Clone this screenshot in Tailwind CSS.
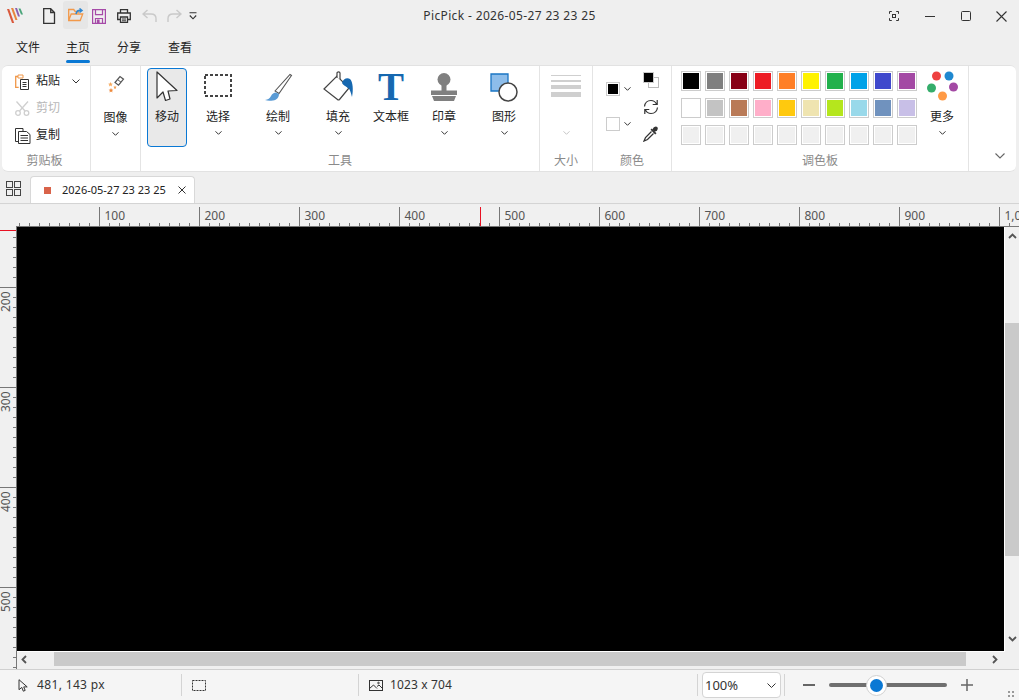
<!DOCTYPE html>
<html lang="zh">
<head>
  <meta charset="UTF-8" />
  <title>PicPick</title>
  <script src="https://cdn.jsdelivr.net/npm/@tailwindcss/browser@4"></script>
</head>
<body class="bg-[#efefef] font-['Noto_Sans','Noto_Sans_CJK_SC',sans-serif] text-[12px] leading-[18px] text-[#222] overflow-hidden">
<div class="w-[1019px] h-[700px] flex flex-col overflow-hidden">

  <!-- title bar -->
  <div class="h-[32px] grid grid-cols-[1fr_auto_1fr] items-center">
    <div class="flex items-center h-[32px]">
      <svg class="ml-[7px] mb-[1px]" width="18" height="17" viewBox="0 0 18 17">
        <path d="M0 2h2.200l5 14H5z" fill="#d9593d"/><path d="M4 1h2.200l4.300 12H8.400z" fill="#e8863f"/>
        <path d="M8 1h2l3 8.500h-2z" fill="#8d5fb0"/><path d="M11.500 1.500h2l2.500 6h-2z" fill="#4aa57a"/>
      </svg>
      <svg class="ml-[17px]" width="14" height="16" viewBox="0 0 14 16" fill="none" stroke="#333" stroke-width="1.300">
        <path d="M1.700.700h7l3.800 3.800v10.800H1.700zM8.700.700v3.800h3.800"/>
      </svg>
      <div class="ml-[7px] w-[25px] h-[28px] mt-[-2px] bg-[#e6e6e6] rounded-[3px] flex items-center justify-center">
        <svg width="16" height="14" viewBox="0 0 16 14" fill="none">
          <path d="M.7 12.500V1.500h5l1.500 2h3v1.500M.7 12.500l2.500-6.500h11.500l-2.500 6.500z" stroke="#f2994a" stroke-width="1.300"/>
          <path d="M8 6c.5-2.500 2.500-4 5-3.500M11.500.500l2.500 2-2.500 2" stroke="#2f87d0" stroke-width="1.500"/>
        </svg>
      </div>
      <svg class="ml-[4px]" width="14" height="15" viewBox="0 0 14 15" fill="none" stroke="#a64aa8" stroke-width="1.200">
        <path d="M.6.600h12.800v13.800H.6zM3.500.600v5h7v-5M3.500 14.400V9.500h7v4.900"/>
        <path d="M5.500 11h1.500v3h-1.500z" fill="#a64aa8"/>
      </svg>
      <svg class="ml-[11px]" width="14" height="14" viewBox="0 0 14 14" fill="none" stroke="#333" stroke-width="1.300">
        <path d="M3.500 4V.7h7V4M3.500 10.500H.7V4h12.600v6.500h-2.800M3.500 8h7v5.300h-7z"/>
        <path d="M5 10h4M5 11.800h4" stroke-width="1"/>
      </svg>
      <svg class="ml-[11px]" width="15" height="14" viewBox="0 0 15 14" fill="none" stroke="#c9c9c9" stroke-width="1.400">
        <path d="M5.500 1 1 5l4.500 4M1 5h8c3 0 5 1.700 5 4.500v3.500"/>
      </svg>
      <svg class="ml-[10px]" width="15" height="14" viewBox="0 0 15 14" fill="none" stroke="#c9c9c9" stroke-width="1.400">
        <path d="M9.500 1 14 5 9.500 9M14 5H6C3 5 1 6.700 1 9.500V13"/>
      </svg>
      <svg class="ml-[7px]" width="8" height="8" viewBox="0 0 8 8" fill="none" stroke="#333" stroke-width="1.100">
        <path d="M.5.700h7M.8 3.500 4 6.800l3.200-3.300"/>
      </svg>
    </div>
    <div class="text-[12px] tracking-[0.36px] text-[#333]">PicPick - 2026-05-27 23 23 25</div>
    <div class="flex items-center justify-end h-[32px]">
      <svg width="10" height="10" viewBox="0 0 10 10" fill="none" stroke="#333" stroke-width="1">
        <path d="M.5 2.800V.5h2.300M7.200.5h2.300v2.300M9.500 7.200v2.300H7.200M2.800 9.500H.5V7.200"/><rect x="3.500" y="3.500" width="3" height="3"/>
      </svg>
      <svg class="ml-[26px]" width="10" height="10" viewBox="0 0 10 10" stroke="#333"><path d="M0 5.500h10"/></svg>
      <svg class="ml-[26px]" width="10" height="10" viewBox="0 0 10 10" fill="none" stroke="#333"><rect x=".5" y=".5" width="9" height="9" rx="1"/></svg>
      <svg class="ml-[25px] mr-[12px]" width="11" height="11" viewBox="0 0 11 11" stroke="#333" stroke-width="1.100"><path d="M.5.500l10 10M10.500.500l-10 10"/></svg>
    </div>
  </div>

  <!-- menu tabs -->
  <div class="h-[33px] flex pl-[16px] gap-[27px] text-[12px] text-[#222]">
    <div class="pt-[7px]">文件</div>
    <div class="pt-[7px] -ml-[1px] relative">主页<div class="absolute left-0 right-0 top-[28px] h-[3px] rounded-[2px] bg-[#0a78d4]"></div></div>
    <div class="pt-[7px]">分享</div>
    <div class="pt-[7px]">查看</div>
  </div>

  <!-- ribbon -->
  <div class="h-[107px] ml-[2px] w-[1014px] bg-white rounded-[6px] border-y border-[#e2e2e2] flex">

    <!-- clipboard -->
    <div class="w-[89px] border-r border-[#e4e4e4] flex flex-col">
      <div class="h-[86px] pl-[13px] pt-[2px]">
        <div class="flex items-center h-[27px]">
          <svg width="14" height="16" viewBox="0 0 14 16" fill="none">
            <path d="M4 2.500H.7v10.800h3" stroke="#f0984a" stroke-width="1.300"/><path d="M3 1h5v3H3z" fill="#fff" stroke="#f0984a"/>
            <path d="M5.500 5.500h8v10h-8zM7.500 8.500h4M7.500 10.500h4M7.500 12.500h4" stroke="#333"/>
          </svg>
          <span class="ml-[7px] mb-[1px]">粘贴</span>
          <svg class="ml-[12px]" width="8" height="5" viewBox="0 0 8 5" fill="none" stroke="#333"><path d="M.5.500 4 4l3.500-3.500"/></svg>
        </div>
        <div class="flex items-center h-[27px] text-[#b8b8b8]">
          <svg width="15" height="15" viewBox="0 0 15 15" fill="none" stroke="#cfcfcf" stroke-width="1.300">
            <circle cx="3" cy="12" r="2.300"/><circle cx="11.500" cy="12" r="2.300"/><path d="M1.500.5 10 10M13 .5 4.500 10"/>
          </svg>
          <span class="ml-[6px] mb-[1px]">剪切</span>
        </div>
        <div class="flex items-center h-[27px]">
          <svg width="16" height="16" viewBox="0 0 16 16" fill="none" stroke="#333">
            <path d="M3.500 13.500H.5V.5H8V3"/><path d="M3.500 3.500h8l3.500 3v9H3.500zM5.500 7.500h7.500M5.500 10h7.500M5.500 12.500h7.500"/>
          </svg>
          <span class="ml-[5px] mb-[1px]">复制</span>
        </div>
      </div>
      <div class="h-[19px] text-center text-[#8a8a8a] pr-[3px]">剪贴板</div>
    </div>

    <!-- image -->
    <div class="w-[50px] border-r border-[#e4e4e4] flex flex-col items-center">
      <svg class="mt-[9px]" width="18" height="19" viewBox="0 0 18 19">
        <path d="M8 7.500 13 1.500l3.500 2.700-5 6z" fill="#fff" stroke="#555" stroke-width="1.200"/>
        <path d="M10.500 4.500l3.500 2.700" stroke="#555"/>
        <path d="M3.500 7l.7 1.600 1.700.2-1.300 1 .4 1.700-1.500-.9-1.500.9.400-1.700-1.300-1 1.700-.2z" fill="#f7a95c"/>
        <path d="M8 10.500l.5 1.200 1.300.1-1 .8.300 1.300L8 13.200l-1.100.7.300-1.300-1-.8 1.300-.1z" fill="#f2994a"/>
        <path d="M4 13l.7 1.600 1.700.2-1.300 1 .4 1.700-1.500-.9-1.500.9.400-1.700-1.300-1 1.700-.2z" fill="#ee8a3c"/>
      </svg>
      <div class="mt-[15px]">图像</div>
      <svg class="mt-[5px]" width="7" height="4" viewBox="0 0 7 4" fill="none" stroke="#333"><path d="M.5.300 3.500 3.300l3-3"/></svg>
    </div>

    <!-- tools -->
    <div class="w-[399px] border-r border-[#e4e4e4] flex flex-col">
      <div class="h-[86px] flex pl-[6px] pt-[2px]">
        <div class="w-[40px] h-[79px] rounded-[4px] border border-[#0a78d4] bg-[#e9e9e9] flex flex-col items-center">
          <svg class="mt-[2px] ml-[1px]" width="24" height="31" viewBox="0 0 24 31" fill="none" stroke="#333" stroke-width="1.200" stroke-linejoin="round">
            <path d="M1 1v26l6-6 2.500 8.500 4.500-1.500-2-8 9-.500z" fill="#fff"/>
          </svg>
          <div class="mt-[6px]">移动</div>
        </div>
        <div class="w-[62px] flex flex-col items-center">
          <div class="h-[40px] pt-[6px]">
            <svg class="block" width="28" height="23" viewBox="0 0 28 23" fill="none" stroke="#444" stroke-width="2" stroke-dasharray="3 2"><rect x="1" y="1" width="26" height="21"/></svg>
          </div>
          <div>选择</div>
          <svg class="mt-[5px]" width="7" height="4" viewBox="0 0 7 4" fill="none" stroke="#333"><path d="M.5.300 3.500 3.300l3-3"/></svg>
        </div>
        <div class="w-[58px] flex flex-col items-center">
          <div class="h-[40px] pt-[5px]">
            <svg class="block" width="29" height="29" viewBox="0 0 29 29" fill="none">
              <path d="M11 18 26 1.500l1.500 1L15 20.500z" fill="#fff" stroke="#555" stroke-width="1.100"/>
              <path d="M1 27c3-.3 5-1.800 6-4 1-2 3-3.500 5-3.500l3 1.500c0 3-2 6-6 6.500-3 .3-6 .3-8-.5z" fill="#5a9bd5"/>
            </svg>
          </div>
          <div>绘制</div>
          <svg class="mt-[5px]" width="7" height="4" viewBox="0 0 7 4" fill="none" stroke="#333"><path d="M.5.300 3.500 3.300l3-3"/></svg>
        </div>
        <div class="w-[62px] flex flex-col items-center">
          <div class="h-[40px] pt-[3px]">
            <svg class="block" width="31" height="31" viewBox="0 0 31 31" fill="none">
              <path d="M1 18 14 5l12 12-9.500 11.500c-.5.500-1.500.500-2 0z" fill="#fff" stroke="#444" stroke-width="1.200"/>
              <path d="M14 7V2c0-1.500 3-1.500 3 0v6" fill="#fff" stroke="#444" stroke-width="1.200"/>
              <path d="M19 12c1-4 5-6 8-4 3 3 3.500 11 2 18-1-4-2-8-4-9-2-1.500-5-3-6-5z" fill="#1668b0"/>
            </svg>
          </div>
          <div>填充</div>
          <svg class="mt-[5px]" width="7" height="4" viewBox="0 0 7 4" fill="none" stroke="#333"><path d="M.5.300 3.500 3.300l3-3"/></svg>
        </div>
        <div class="w-[44px] flex flex-col items-center">
          <div class="h-[40px] font-['Liberation_Serif',serif] font-bold text-[39px] leading-[37px] text-[#1668b0]">T</div>
          <div class="whitespace-nowrap">文本框</div>
        </div>
        <div class="w-[62px] flex flex-col items-center">
          <div class="h-[40px] pt-[4px]">
            <svg class="block" width="28" height="29" viewBox="0 0 28 29" fill="#808080">
              <circle cx="14" cy="7.500" r="6.500"/><path d="M11.500 12h5v7h-5zM1 18.500h26V23H1zM2 24h24l-2 5H4z"/>
            </svg>
          </div>
          <div>印章</div>
          <svg class="mt-[5px]" width="7" height="4" viewBox="0 0 7 4" fill="none" stroke="#333"><path d="M.5.300 3.500 3.300l3-3"/></svg>
        </div>
        <div class="w-[58px] flex flex-col items-center">
          <div class="h-[40px] pt-[5px]">
            <svg class="block" width="28" height="29" viewBox="0 0 28 29" fill="none">
              <path d="M1 1h17v17H1z" fill="#8dbdea" stroke="#1a75c4" stroke-width="1.300"/>
              <circle cx="18" cy="19" r="9" fill="#fff" stroke="#444" stroke-width="1.500"/>
            </svg>
          </div>
          <div>图形</div>
          <svg class="mt-[5px]" width="7" height="4" viewBox="0 0 7 4" fill="none" stroke="#333"><path d="M.5.300 3.500 3.300l3-3"/></svg>
        </div>
      </div>
      <div class="h-[19px] text-center text-[#8a8a8a]">工具</div>
    </div>

    <!-- size -->
    <div class="w-[53px] border-r border-[#e4e4e4] flex flex-col items-center">
      <div class="h-[86px] flex flex-col items-center">
        <div class="mt-[9px] w-[30px] flex flex-col gap-[3px]">
          <div class="h-[1px] bg-[#cfcfcf]"></div><div class="h-[2px] mt-[1px] bg-[#cfcfcf]"></div><div class="h-[4px] bg-[#cfcfcf]"></div><div class="h-[5px] bg-[#cfcfcf]"></div>
        </div>
        <svg class="mt-[34px]" width="7" height="4" viewBox="0 0 7 4" fill="none" stroke="#c5c5c5"><path d="M.5.300 3.500 3.300l3-3"/></svg>
      </div>
      <div class="h-[19px] text-[#8a8a8a]">大小</div>
    </div>

    <!-- colours -->
    <div class="w-[79px] border-r border-[#e4e4e4] flex flex-col">
      <div class="h-[86px] flex">
        <div class="pl-[13px] pt-[16px] w-[50px]">
          <div class="flex items-center gap-[4px]">
            <div class="w-[14px] h-[14px] border border-[#ccc] bg-black bg-clip-content p-[1px]"></div>
            <svg width="7" height="4" viewBox="0 0 7 4" fill="none" stroke="#333"><path d="M.5.300 3.500 3.300l3-3"/></svg>
          </div>
          <div class="flex items-center gap-[4px] mt-[21px]">
            <div class="w-[14px] h-[14px] border border-[#ccc] bg-white"></div>
            <svg width="7" height="4" viewBox="0 0 7 4" fill="none" stroke="#333"><path d="M.5.300 3.500 3.300l3-3"/></svg>
          </div>
        </div>
        <div class="flex flex-col pt-[6px]">
          <svg width="16" height="16" viewBox="0 0 16 16"><rect x="5.500" y="5.500" width="10" height="10" fill="#fff" stroke="#bbb"/><rect x=".5" y=".5" width="10" height="10" fill="#000" stroke="#ccc"/></svg>
          <svg class="mt-[11px]" width="16" height="16" viewBox="0 0 16 16" fill="none" stroke="#333" stroke-width="1.200">
            <path d="M1.500 7.500C2 3.500 4.800 1.500 8 1.500c2.500 0 4.500 1.500 5.500 3.500M14.200 1v4.500H9.700M14.500 8.500c-.5 4-3.300 6-6.500 6-2.500 0-4.500-1.500-5.500-3.500M1.800 15v-4.500h4.500"/>
          </svg>
          <svg class="mt-[11px]" width="16" height="16" viewBox="0 0 16 16" fill="none">
            <path d="M10 2.500c1.200-1.800 3-2.500 4.200-1.400s.6 3-1.200 4.200l-1.500.5-2-2z" fill="#333"/>
            <path d="M7.500 3.800 8.800 2.500l4.700 4.700-1.300 1.300z" fill="#333"/>
            <path d="M8.500 5.500 2.500 11.500l-1.500 3.500 3.500-1.500 6-6" fill="#fff" stroke="#333" stroke-width="1.300"/>
          </svg>
        </div>
      </div>
      <div class="h-[19px] text-center text-[#8a8a8a]">颜色</div>
    </div>

    <!-- palette -->
    <div class="w-[297px] border-r border-[#e4e4e4] flex flex-col">
      <div class="h-[86px] flex pl-[9px] pt-[5px]">
        <div class="grid grid-cols-10 gap-x-[4px] gap-y-[7px] h-[74px] content-start">
          <div class="w-[20px] h-[20px] border border-[#ccc] p-[1px]"><div class="w-full h-full bg-[#000000]"></div></div>
          <div class="w-[20px] h-[20px] border border-[#ccc] p-[1px]"><div class="w-full h-full bg-[#7f7f7f]"></div></div>
          <div class="w-[20px] h-[20px] border border-[#ccc] p-[1px]"><div class="w-full h-full bg-[#880015]"></div></div>
          <div class="w-[20px] h-[20px] border border-[#ccc] p-[1px]"><div class="w-full h-full bg-[#ed1c24]"></div></div>
          <div class="w-[20px] h-[20px] border border-[#ccc] p-[1px]"><div class="w-full h-full bg-[#ff7f27]"></div></div>
          <div class="w-[20px] h-[20px] border border-[#ccc] p-[1px]"><div class="w-full h-full bg-[#fff200]"></div></div>
          <div class="w-[20px] h-[20px] border border-[#ccc] p-[1px]"><div class="w-full h-full bg-[#22b14c]"></div></div>
          <div class="w-[20px] h-[20px] border border-[#ccc] p-[1px]"><div class="w-full h-full bg-[#00a2e8]"></div></div>
          <div class="w-[20px] h-[20px] border border-[#ccc] p-[1px]"><div class="w-full h-full bg-[#3f48cc]"></div></div>
          <div class="w-[20px] h-[20px] border border-[#ccc] p-[1px]"><div class="w-full h-full bg-[#a349a4]"></div></div>

          <div class="w-[20px] h-[20px] border border-[#ccc] p-[1px]"><div class="w-full h-full bg-[#ffffff]"></div></div>
          <div class="w-[20px] h-[20px] border border-[#ccc] p-[1px]"><div class="w-full h-full bg-[#c3c3c3]"></div></div>
          <div class="w-[20px] h-[20px] border border-[#ccc] p-[1px]"><div class="w-full h-full bg-[#b97a57]"></div></div>
          <div class="w-[20px] h-[20px] border border-[#ccc] p-[1px]"><div class="w-full h-full bg-[#ffaec9]"></div></div>
          <div class="w-[20px] h-[20px] border border-[#ccc] p-[1px]"><div class="w-full h-full bg-[#ffc90e]"></div></div>
          <div class="w-[20px] h-[20px] border border-[#ccc] p-[1px]"><div class="w-full h-full bg-[#efe4b0]"></div></div>
          <div class="w-[20px] h-[20px] border border-[#ccc] p-[1px]"><div class="w-full h-full bg-[#b5e61d]"></div></div>
          <div class="w-[20px] h-[20px] border border-[#ccc] p-[1px]"><div class="w-full h-full bg-[#99d9ea]"></div></div>
          <div class="w-[20px] h-[20px] border border-[#ccc] p-[1px]"><div class="w-full h-full bg-[#7092be]"></div></div>
          <div class="w-[20px] h-[20px] border border-[#ccc] p-[1px]"><div class="w-full h-full bg-[#c8bfe7]"></div></div>

          <div class="w-[20px] h-[20px] border border-[#ccc] p-[1px]"><div class="w-full h-full bg-[#f0f0f0]"></div></div>
          <div class="w-[20px] h-[20px] border border-[#ccc] p-[1px]"><div class="w-full h-full bg-[#f0f0f0]"></div></div>
          <div class="w-[20px] h-[20px] border border-[#ccc] p-[1px]"><div class="w-full h-full bg-[#f0f0f0]"></div></div>
          <div class="w-[20px] h-[20px] border border-[#ccc] p-[1px]"><div class="w-full h-full bg-[#f0f0f0]"></div></div>
          <div class="w-[20px] h-[20px] border border-[#ccc] p-[1px]"><div class="w-full h-full bg-[#f0f0f0]"></div></div>
          <div class="w-[20px] h-[20px] border border-[#ccc] p-[1px]"><div class="w-full h-full bg-[#f0f0f0]"></div></div>
          <div class="w-[20px] h-[20px] border border-[#ccc] p-[1px]"><div class="w-full h-full bg-[#f0f0f0]"></div></div>
          <div class="w-[20px] h-[20px] border border-[#ccc] p-[1px]"><div class="w-full h-full bg-[#f0f0f0]"></div></div>
          <div class="w-[20px] h-[20px] border border-[#ccc] p-[1px]"><div class="w-full h-full bg-[#f0f0f0]"></div></div>
          <div class="w-[20px] h-[20px] border border-[#ccc] p-[1px]"><div class="w-full h-full bg-[#f0f0f0]"></div></div>
        </div>
        <div class="ml-[9px] flex flex-col items-center w-[32px]">
          <svg width="31" height="30" viewBox="0 0 31 30">
            <circle cx="9.500" cy="5" r="4.500" fill="#ee4040"/><circle cx="22" cy="5" r="4.500" fill="#1f88d0"/>
            <circle cx="4.500" cy="17" r="4.500" fill="#35ad6b"/><circle cx="26.500" cy="16" r="4.500" fill="#a349a4"/>
            <circle cx="15.500" cy="25" r="4.500" fill="#ff9a45"/>
          </svg>
          <div class="mt-[7px]">更多</div>
          <svg class="mt-[5px]" width="7" height="4" viewBox="0 0 7 4" fill="none" stroke="#333"><path d="M.5.300 3.500 3.300l3-3"/></svg>
        </div>
      </div>
      <div class="h-[19px] text-center text-[#8a8a8a]">调色板</div>
    </div>

    <div class="flex-1 flex items-end justify-end pb-[12px] pr-[11px]">
      <svg width="10" height="6" viewBox="0 0 10 6" fill="none" stroke="#666" stroke-width="1.100"><path d="M.5.500 5 5 9.500.500"/></svg>
    </div>
  </div>

  <!-- document tabs -->
  <div class="h-[32px] flex items-end border-b border-[#d4d4d4]">
    <svg class="ml-[6px] mb-[7px]" width="15" height="15" viewBox="0 0 15 15" fill="none" stroke="#444">
      <rect x=".5" y=".5" width="6" height="6"/><rect x="8.500" y=".5" width="6" height="6"/><rect x=".5" y="8.500" width="6" height="6"/><rect x="8.500" y="8.500" width="6" height="6"/>
    </svg>
    <div class="ml-[9px] w-[165px] h-[27px] bg-white border border-b-0 border-[#d8d8d8] rounded-t-[4px] flex items-center">
      <div class="ml-[13px] w-[7px] h-[7px] bg-[#d9634a]"></div>
      <span class="ml-[11px] text-[11px] text-[#222]">2026-05-27 23 23 25</span>
      <svg class="ml-[12px]" width="8" height="8" viewBox="0 0 8 8" stroke="#333"><path d="M.5.500l7 7M7.500.500l-7 7"/></svg>
    </div>
  </div>

  <!-- rulers + canvas -->
  <div class="h-[464px] grid grid-cols-[17px_1fr] grid-rows-[22px_1fr] mt-[1px]">
    <svg id="ruler-top" class="col-span-2 bg-[#f0f0f0]" width="1019" height="22" viewBox="0 205 1019 22"></svg>
    <svg id="ruler-left" class="bg-[#f0f0f0]" width="17" height="442" viewBox="0 227 17 442"></svg>
    <div class="grid grid-cols-[987px_1px_1fr] grid-rows-[424px_1px_1fr] bg-[#f0f0f0]">
      <div class="bg-black"></div>
      <div class="bg-white"></div>
      <div class="row-span-3 flex flex-col items-center">
        <svg class="mt-[6px]" width="9" height="6" viewBox="0 0 9 6" fill="none" stroke="#555" stroke-width="1.800"><path d="M1 5l3.500-3.500L8 5"/></svg>
        <div class="mt-[84px] w-full h-[233px] bg-[#cacaca]"></div>
        <svg class="mt-[80px]" width="9" height="6" viewBox="0 0 9 6" fill="none" stroke="#555" stroke-width="1.800"><path d="M1 1l3.500 3.500L8 1"/></svg>
      </div>
      <div class="col-span-2 bg-white"></div>
      <div class="col-span-1 flex items-start">
        <svg class="ml-[4px] mt-[3px]" width="6" height="9" viewBox="0 0 6 9" fill="none" stroke="#555" stroke-width="1.800"><path d="M5 1 1.500 4.500 5 8"/></svg>
        <div class="ml-[27px] w-[912px] h-[14px] bg-[#cacaca]"></div>
        <svg class="ml-[26px] mt-[3px]" width="6" height="9" viewBox="0 0 6 9" fill="none" stroke="#555" stroke-width="1.800"><path d="M1 1l3.500 3.500L1 8"/></svg>
      </div>
    </div>
  </div>

  <!-- status bar -->
  <div class="flex-1 bg-[#f5f5f5] border-t border-[#d0d0d0] flex items-center text-[12px] text-[#333] relative">
    <div class="w-[181px] flex items-center pl-[18px]">
      <svg width="10" height="13" viewBox="0 0 10 13" fill="none" stroke="#333"><path d="M1 .7v10l2.800-2.300 1.500 3.800 1.900-.8-1.500-3.500h3.500z"/></svg>
      <span class="ml-[9px] tracking-[0.35px]">481, 143 px</span>
    </div>
    <div class="w-[1px] h-[22px] bg-[#d4d4d4]"></div>
    <div class="w-[176px] pl-[10px]">
      <svg class="block" width="14" height="11" viewBox="0 0 14 11" fill="none" stroke="#333" stroke-dasharray="2 1"><rect x=".5" y=".5" width="13" height="10"/></svg>
    </div>
    <div class="w-[1px] h-[22px] bg-[#d4d4d4]"></div>
    <div class="w-[338px] flex items-center pl-[10px]">
      <svg width="14" height="11" viewBox="0 0 14 11" fill="none" stroke="#333"><rect x=".5" y=".5" width="13" height="10"/><path d="M.5 8.500 4.500 5l3.500 3.500M8 6.500l2-1.500 3.500 3.500"/><circle cx="9.500" cy="3" r=".8"/></svg>
      <span class="ml-[7px] tracking-[0.15px]">1023 x 704</span>
    </div>
    <div class="w-[1px] h-[22px] bg-[#d4d4d4]"></div>
    <div class="ml-[4px] w-[79px] h-[26px] bg-white border border-[#d4d4d4] rounded-[4px] flex items-center justify-between px-[2px]">
      <span class="text-[13px]">100%</span>
      <svg class="mr-[2px]" width="9" height="5" viewBox="0 0 9 5" fill="none" stroke="#333"><path d="M.5.500 4.500 4.500l4-4"/></svg>
    </div>
    <div class="ml-[3px] w-[1px] h-[22px] bg-[#d4d4d4]"></div>
    <div class="ml-[18px] w-[12px] h-[2px] bg-[#666]"></div>
    <div class="ml-[14px] w-[118px] h-[4px] rounded-full bg-[#6f6f6f] relative">
      <div class="absolute left-[37px] top-[-8.500px] w-[21px] h-[21px] rounded-full bg-white border border-[#d0d0d0] flex items-center justify-center">
        <div class="w-[13px] h-[13px] rounded-full bg-[#0a78d4]"></div>
      </div>
    </div>
    <svg class="ml-[14px]" width="12" height="12" viewBox="0 0 12 12" stroke="#666" stroke-width="1.500"><path d="M0 6h12M6 0v12"/></svg>
    <svg class="absolute left-[1008px] top-[21px]" width="6" height="7" viewBox="0 0 6 7" fill="#999"><rect x="0" y="0" width="2" height="2"/><rect x="4" y="0" width="2" height="2"/><rect x="0" y="4" width="2" height="2"/><rect x="4" y="4" width="2" height="2"/></svg>
  </div>
</div>

<script>
  // rulers: ticks every 10px, a long tick and a label every 100
  const NS = "http://www.w3.org/2000/svg";
  function add(svg, tag, attrs, txt) {
    const el = document.createElementNS(NS, tag);
    for (const k in attrs) el.setAttribute(k, attrs[k]);
    if (txt) el.textContent = txt;
    svg.appendChild(el);
  }
  const top_ = document.getElementById("ruler-top");
  const left_ = document.getElementById("ruler-left");

  add(top_, "rect", { x: 16, y: 226, width: 1003, height: 1, fill: "#777" });
  for (let v = 20; v <= 1020; v += 10) {
    const x = v - 0.5;
    if (v % 100 === 0) {
      add(top_, "line", { x1: x, x2: x, y1: 207, y2: 226, stroke: "#777" });
      const label = v === 1000 ? "1,0" : String(v);
      add(top_, "text", { x: x + 5, y: 220, fill: "#555", "font-size": 12, "font-family": "Noto Sans" }, label);
    } else {
      add(top_, "line", { x1: x, x2: x, y1: 223, y2: 226, stroke: "#777" });
    }
  }
  add(top_, "line", { x1: 480.5, x2: 480.5, y1: 207, y2: 226, stroke: "#e81123" });

  add(left_, "rect", { x: 16, y: 227, width: 1, height: 442, fill: "#777" });
  for (let y = 237; y <= 667; y += 10) {
    if ((y - 87) % 100 === 0) {
      add(left_, "line", { x1: 0, x2: 16, y1: y + 0.5, y2: y + 0.5, stroke: "#777" });
      add(left_, "text", { x: 0, y: 0, fill: "#555", "font-size": 12, "font-family": "Noto Sans",
        transform: "translate(10 " + (y + 25) + ") rotate(-90)" }, String(y - 87));
    } else {
      add(left_, "line", { x1: 13, x2: 16, y1: y + 0.5, y2: y + 0.5, stroke: "#777" });
    }
  }
  add(left_, "line", { x1: 0, x2: 16, y1: 230.5, y2: 230.5, stroke: "#e81123" });
</script>
</body>
</html>
